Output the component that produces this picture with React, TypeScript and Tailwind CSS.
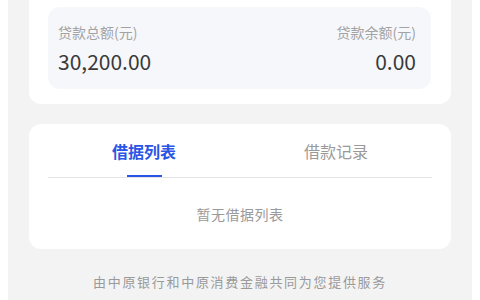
export default function App() {
  const font = { fontFamily: '"Noto Sans CJK SC", "Noto Sans", sans-serif' };
  return (
    <div className="h-[300px] w-[480px] overflow-hidden bg-white" style={font}>
      <div className="mx-[8px] h-full bg-[#f3f3f3] px-[21px]">
        {/* summary card */}
        <div className="rounded-b-xl bg-white pb-[15px] pl-[19px] pr-[20px] pt-[7px]">
          <div className="flex items-start justify-between rounded-xl bg-[#f6f7fb] pb-[14px] pl-[10px] pr-[15px] pt-[15px]">
            <div>
              <div className="text-[14px] leading-[20px] text-[#a3a3a3]">贷款总额(元)</div>
              <div className="mt-[5px] text-[21px] leading-[28px] text-[#3a3a3a]">30,200.00</div>
            </div>
            <div className="text-right">
              <div className="text-[14px] leading-[20px] text-[#a3a3a3]">贷款余额(元)</div>
              <div className="mt-[5px] text-[21px] leading-[28px] text-[#3a3a3a]">0.00</div>
            </div>
          </div>
        </div>

        {/* tabs card */}
        <div className="mt-[20px] rounded-xl bg-white px-[19px]">
          <div className="flex border-b border-[#e3e3e8]">
            <div className="flex flex-1 flex-col items-center pt-[15px]">
              <span className="text-[16px] font-bold leading-[24px] text-[#2a55e6]">借据列表</span>
              <span className="mt-[12px] h-[2px] w-[35px] bg-[#2a55e6]" />
            </div>
            <div className="flex flex-1 flex-col items-center pt-[15px]">
              <span className="text-[16px] leading-[24px] text-[#9a9a9a]">借款记录</span>
              <span className="mt-[12px] h-[2px] w-[35px]" />
            </div>
          </div>
          <div className="pb-[25px] pt-[26px] text-center text-[14px] leading-[20px] tracking-[0.5px] text-[#9a9a9a]">暂无借据列表</div>
        </div>

        <div className="mt-[23px] text-center text-[13px] leading-[20px] tracking-[1.7px] text-[#9a9a9a]">
          由中原银行和中原消费金融共同为您提供服务
        </div>
      </div>
    </div>
  );
}
